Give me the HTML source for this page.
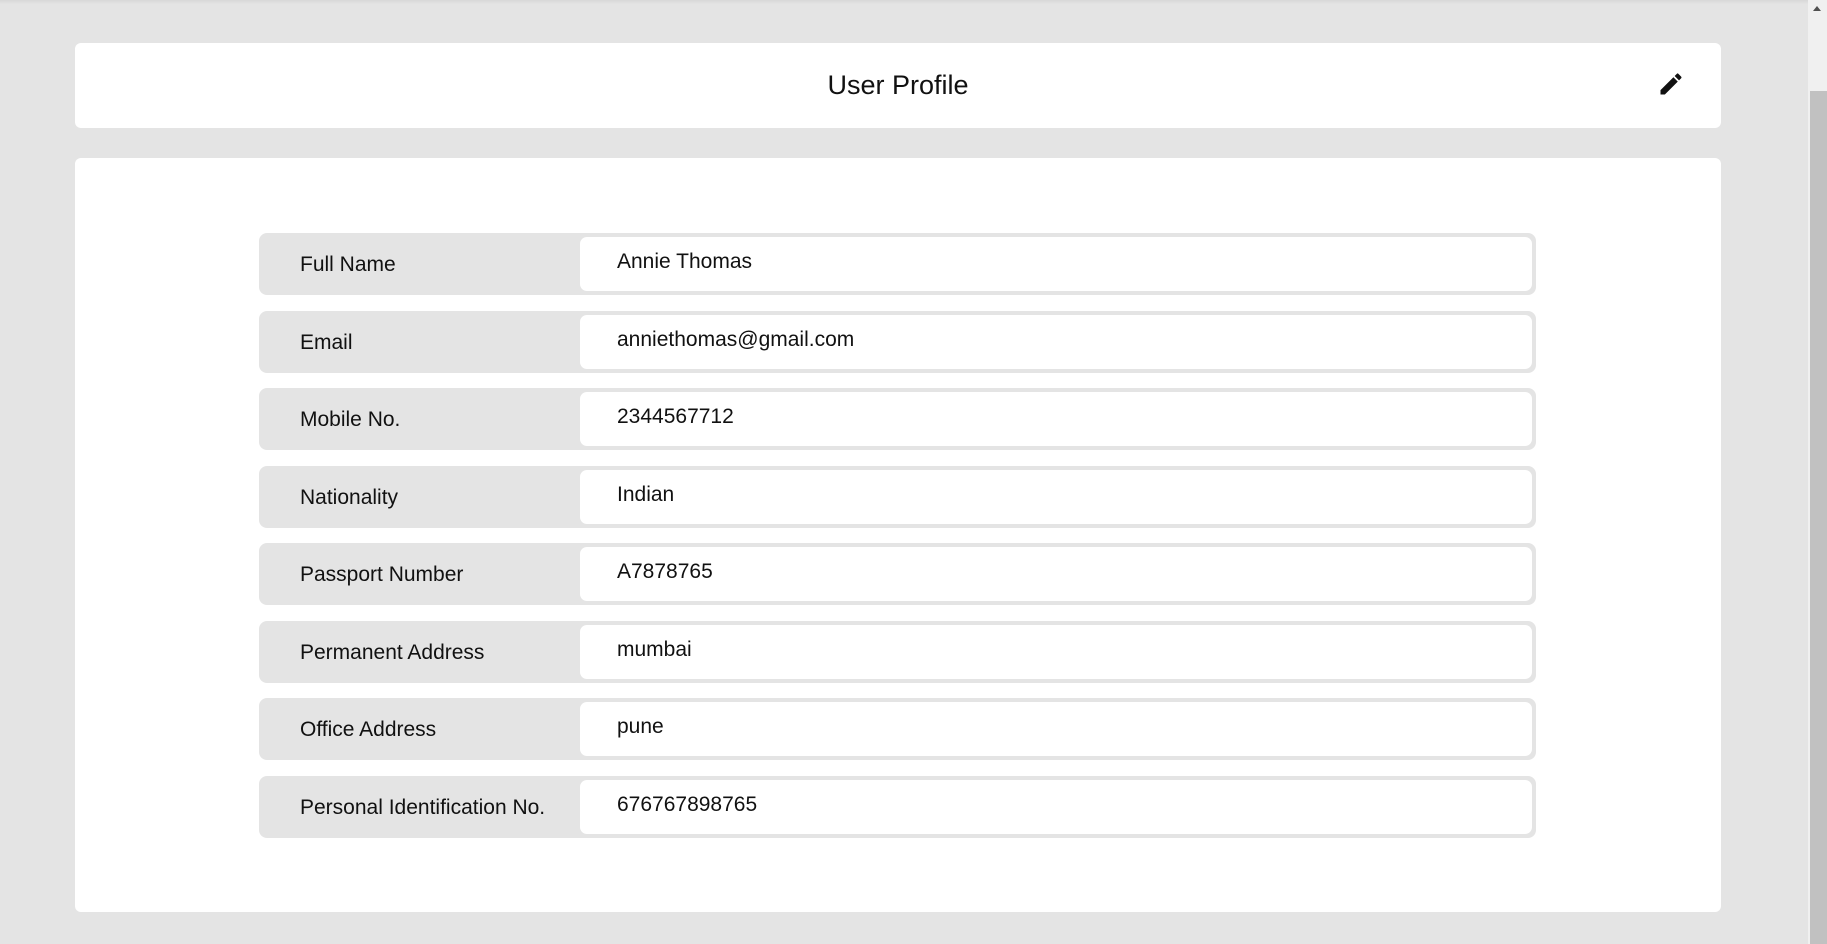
<!DOCTYPE html>
<html><head><style>
html,body{margin:0;padding:0;}
body{width:1827px;height:944px;background:#e4e4e4;position:relative;overflow:hidden;font-family:"Liberation Sans",Roboto,sans-serif;color:#111;}
.sb{position:absolute;left:1808px;top:0;width:19px;height:944px;background:#f0f0f0;}
.thumb{position:absolute;left:2px;top:91px;width:17px;height:853px;background:#c1c1c1;}
.arr{position:absolute;left:5px;top:6px;width:0;height:0;border-left:4px solid transparent;border-right:4px solid transparent;border-bottom:5px solid #505050;}
.topsh{position:absolute;left:0;top:0;width:1808px;height:4px;background:linear-gradient(#d8d8d8,#e4e4e4);}
.hdr{position:absolute;left:75px;top:43px;width:1646px;height:85px;background:#fff;border-radius:6px;}
.hdr h1{margin:0;position:absolute;left:0;right:0;top:27px;text-align:center;font-weight:normal;font-size:27px;}
.pen{position:absolute;left:1582px;top:27px;}
.card{position:absolute;left:75px;top:158px;width:1646px;height:754px;background:#fff;border-radius:6px;}
.row{position:absolute;left:259px;width:1277px;height:62px;background:#e4e4e4;border-radius:8px;}
.lab{position:absolute;left:41px;top:20px;font-size:21px;}
.val{position:absolute;left:321px;top:4px;right:4px;bottom:4px;background:#fff;border-radius:7px;}
.val span{position:absolute;left:37px;top:13px;font-size:21px;}
</style></head><body>
<div class="topsh"></div>
<div class="hdr"><h1>User Profile</h1>
<svg class="pen" width="28" height="28" viewBox="0 0 24 24"><path d="M3 17.25V21h3.75L17.81 9.94l-3.75-3.75L3 17.25zM20.71 7.04a1 1 0 0 0 0-1.41l-2.34-2.34a1 1 0 0 0-1.41 0l-1.83 1.83 3.75 3.75 1.83-1.83z" fill="#111"/></svg>
</div>
<div class="card"></div>
<div class="row" style="top:233px"><div class="lab">Full Name</div><div class="val"><span>Annie Thomas</span></div></div>
<div class="row" style="top:311px"><div class="lab">Email</div><div class="val"><span>anniethomas@gmail.com</span></div></div>
<div class="row" style="top:388px"><div class="lab">Mobile No.</div><div class="val"><span>2344567712</span></div></div>
<div class="row" style="top:466px"><div class="lab">Nationality</div><div class="val"><span>Indian</span></div></div>
<div class="row" style="top:543px"><div class="lab">Passport Number</div><div class="val"><span>A7878765</span></div></div>
<div class="row" style="top:621px"><div class="lab">Permanent Address</div><div class="val"><span>mumbai</span></div></div>
<div class="row" style="top:698px"><div class="lab">Office Address</div><div class="val"><span>pune</span></div></div>
<div class="row" style="top:776px"><div class="lab">Personal Identification No.</div><div class="val"><span>676767898765</span></div></div>
<div class="sb"><div class="arr"></div><div class="thumb"></div></div>
</body></html>
